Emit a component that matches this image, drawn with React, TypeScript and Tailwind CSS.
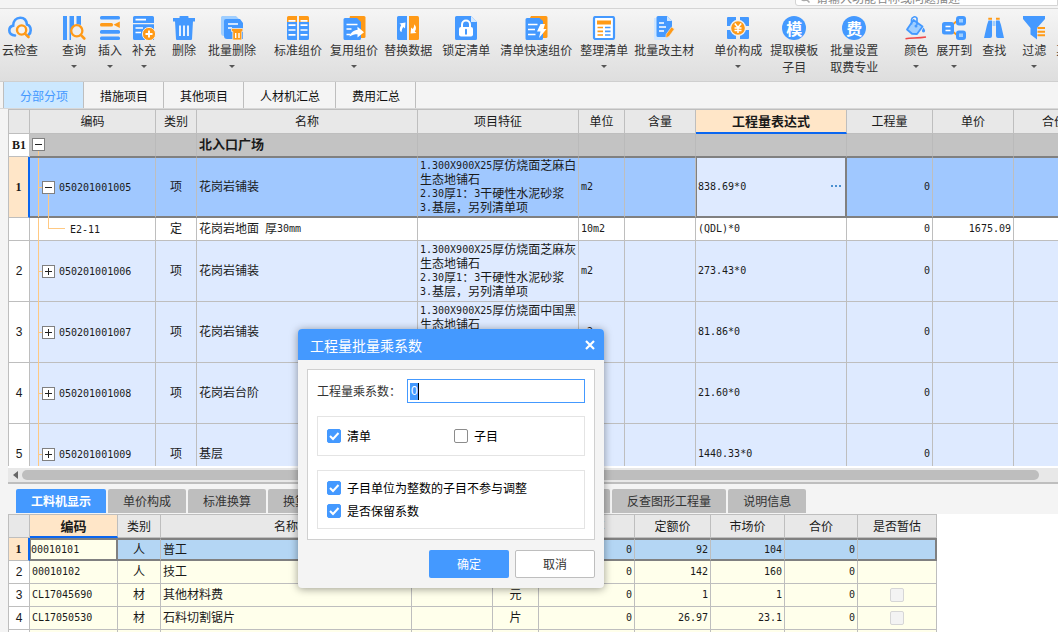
import React from "react";

const BLUE = "#4499ff";
const ORANGE = "#ff9a17";
const PALE = "#9fceff";

type IconName =
  | "cloud" | "query" | "insert" | "supplement" | "trash" | "batchTrash" | "standard" | "reuse" | "swap" | "lock"
  | "fast" | "arrange" | "material" | "price" | "template" | "fee" | "color" | "expand" | "find" | "filter" | "none";

const icons: Record<IconName, React.ReactNode> = {
  none: null,
  cloud: (
    <g fill="none" strokeLinecap="round">
      <path d="M7 19.5C3.500 19.500 1.300 17.400 1.300 14.500C1.300 11.800 3 10 5.200 9.600C5.300 5 8.200 1.700 12.200 1.700C16 1.700 18.600 4.300 19 8.600C21.400 9.400 22.700 11.600 22.700 14.200C22.700 16.500 21.800 18 20.500 18.900" stroke={BLUE} strokeWidth="2.6" />
      <circle cx="13.600" cy="14" r="4.600" stroke={ORANGE} strokeWidth="2.400" fill="#f4f4f4" />
      <path d="M17 17.600L20.500 21" stroke={ORANGE} strokeWidth="2.600" />
    </g>
  ),
  query: (
    <g>
      <path d="M1 0h4v24H1zM7.500 0H12v10L9 14v10H7.500zM14.500 0H19v9l-4.500-1z" fill={BLUE} />
      <circle cx="14.800" cy="14.800" r="5.600" stroke={ORANGE} strokeWidth="2.300" fill="#eeeeee" />
      <path d="M19 19.200L22.300 22.500" stroke={ORANGE} strokeWidth="2.600" strokeLinecap="round" />
    </g>
  ),
  insert: (
    <g>
      <rect x="2" y="0" width="20" height="3.600" rx="1.500" fill={BLUE} />
      <rect x="2" y="7" width="13" height="3.400" rx="1.500" fill={ORANGE} />
      <path d="M15.500 8.700L21.800 5.500V12z" fill={ORANGE} />
      <rect x="2" y="14" width="20" height="3.800" rx="1.500" fill={BLUE} />
      <rect x="2" y="20.400" width="20" height="3.600" rx="1.500" fill={BLUE} />
    </g>
  ),
  supplement: (
    <g>
      <path d="M2.500 0h18a1.500 1.500 0 0 1 1.500 1.500V7H1V1.500A1.500 1.500 0 0 1 2.500 0zM1 8.300h21V24H2.500A1.500 1.500 0 0 1 1 22.500z" fill={BLUE} />
      <path d="M3.500 3.700H14M3.500 12H11M3.500 16.500H9" stroke="#fff" strokeWidth="1.700" />
      <circle cx="17" cy="18" r="6.600" fill={ORANGE} stroke="#eeeeee" strokeWidth="1" />
      <path d="M13.500 18h7M17 14.500v7" stroke="#fff" strokeWidth="1.900" />
    </g>
  ),
  trash: (
    <g fill={BLUE}>
      <path d="M7.500 2V.8A.8.800 0 0 1 8.300 0h7.400a.8.800 0 0 1 .8.800V2H23v3.600H1V2z" />
      <path d="M3 5h18l-1 18a1 1 0 0 1-1 1H5a1 1 0 0 1-1-1z" />
      <path d="M8 9.500V20M12 9.500V20M16 9.500V20" stroke="#fff" strokeWidth="1.700" />
    </g>
  ),
  batchTrash: (
    <g>
      <path d="M2 0h14l3 3v17H4a3 3 0 0 1-3-3V1z" fill={PALE} />
      <path d="M6 3h14l3 4v16H7a3 3 0 0 1-3-3V5a2 2 0 0 1 2-2z" fill={BLUE} />
      <path d="M8 8h10M8 12h4" stroke="#fff" strokeWidth="1.600" />
      <path d="M11.500 12.500h11.300v3h-1V24h-9v-8.500h-1.300z" fill={ORANGE} stroke="#eeeeee" strokeWidth=".8" />
      <path d="M15.700 17v5M19 17v5" stroke="#fff" strokeWidth="1.400" />
    </g>
  ),
  standard: (
    <g>
      <path d="M1 1.500A1.500 1.500 0 0 1 2.500 0H11v6H1zM13 0h8.500A1.500 1.500 0 0 1 23 1.500V6H13z" fill={ORANGE} />
      <path d="M1 6h10v18H2.500A1.500 1.500 0 0 1 1 22.500zM13 6h10v16.500a1.500 1.500 0 0 1-1.500 1.500H13z" fill={BLUE} />
      <path d="M2.500 4.800h7M14.500 4.800h7M2.500 9.200h7M14.500 9.200h7M2.500 14h7M14.500 14h7M2.500 18.800h7M14.500 18.800h7" stroke="#fff" strokeWidth="1.700" />
    </g>
  ),
  reuse: (
    <g>
      <path d="M8 0h14a1.500 1.500 0 0 1 1.500 1.500v19A1.500 1.500 0 0 1 22 22h-5L7 4z" fill={ORANGE} />
      <path d="M3 2h12l4 4v16.500a1.500 1.500 0 0 1-1.500 1.500H3a1.500 1.500 0 0 1-1.500-1.500v-19A1.500 1.500 0 0 1 3 2z" fill={BLUE} />
      <path d="M4.500 8.500h11M4.500 13h5M4.500 18.500h4" stroke="#fff" strokeWidth="1.700" />
      <path d="M7.500 20.500c1-4 4.500-6.500 8-6.500v-3.200l6.500 5.400-6.500 5.300v-3.200c-3 0-5 .500-8 2.200z" fill="#fff" />
    </g>
  ),
  swap: (
    <g>
      <path d="M2.500 0H11v24H2.500A1.500 1.500 0 0 1 1 22.500v-21A1.500 1.500 0 0 1 2.500 0z" fill={BLUE} />
      <path d="M13 0h8.500A1.500 1.500 0 0 1 23 1.500v21a1.500 1.500 0 0 1-1.500 1.500H13z" fill={ORANGE} />
      <path d="M3.500 7.500l6-1-.5 6-1.700-1.500c-1 1.300-1.500 3-1.700 5C4 16 2.800 13 5.200 9zM20.500 17l-6 .5.700-6 1.600 1.500c1-1.300 1.500-2.800 1.400-4.700 2.300 2.200 2.300 5 .6 7.200z" fill="#fff" />
    </g>
  ),
  lock: (
    <g>
      <path d="M2.500 0H17l6 6v16.500a1.500 1.500 0 0 1-1.500 1.500h-19A1.500 1.500 0 0 1 1 22.500v-21A1.500 1.500 0 0 1 2.500 0z" fill={BLUE} />
      <path d="M17 0l6 6h-6z" fill="#d6eaff" />
      <rect x="5" y="11" width="14" height="9.500" rx="2" fill="#fff" />
      <path d="M8 11.500V8.500a4 4 0 0 1 8 0v3" fill="none" stroke="#fff" strokeWidth="2" />
      <path d="M12 13.800v4" stroke={BLUE} strokeWidth="2" strokeLinecap="round" />
    </g>
  ),
  fast: (
    <g>
      <path d="M7 0h15a1.500 1.500 0 0 1 1.500 1.500v19A1.500 1.500 0 0 1 22 22h-4L6 2z" fill={ORANGE} />
      <path d="M3 2h12.500L19 5v17.500a1.500 1.500 0 0 1-1.500 1.500H3a1.500 1.500 0 0 1-1.500-1.500v-19A1.500 1.500 0 0 1 3 2z" fill={BLUE} />
      <path d="M4 8.500h9.500M4 13.500h7M4 18.500h7.500" stroke="#fff" strokeWidth="1.700" />
      <path d="M16.500 8h4.500l-1.500 5h3l-7.500 9 1.500-6.500h-3.500z" fill="#fff" />
    </g>
  ),
  arrange: (
    <g>
      <rect x="2" y="1" width="20" height="22" rx="1.500" fill="#fff" stroke={BLUE} strokeWidth="2.200" />
      <rect x="5" y="4.500" width="14" height="4" fill={ORANGE} />
      <path d="M5.500 11.500H11M5.500 15.300H11M5.500 19H11" stroke={ORANGE} strokeWidth="1.700" />
      <path d="M13 11.500h5.500M13 15.300h5.500M13 19h5.500" stroke={BLUE} strokeWidth="1.700" />
    </g>
  ),
  material: (
    <g>
      <path d="M2 2h4v18.500h11.500V24H3.500A1.500 1.500 0 0 1 2 22.500z" fill="#cfe6ff" />
      <path d="M6 0h9l5 5v11l-5 5H6a1.500 1.500 0 0 1-1.500-1.500v-18A1.500 1.500 0 0 1 6 0z" fill={BLUE} />
      <path d="M15 0l5 5h-5z" fill="#cfe6ff" />
      <path d="M7 7h5M7 11h7M7 15h5" stroke="#fff" strokeWidth="1.600" />
      <path d="M14.200 18.200l5.300-7.200 2.900 2-5.300 7.400-3.300 1.500z" fill={ORANGE} stroke="#eeeeee" strokeWidth=".6" />
    </g>
  ),
  price: (
    <g>
      <path d="M2 1h8v5l-4 4H1V2a1 1 0 0 1 1-1zM14 1h8a1 1 0 0 1 1 1v8h-5l-4-4zM1 14h5l4 4v5H2a1 1 0 0 1-1-1zM18 14h5v8a1 1 0 0 1-1 1h-8v-5z" fill={BLUE} />
      <circle cx="12" cy="12" r="7.500" fill={ORANGE} stroke="#f1f1f1" strokeWidth="1.300" />
      <path d="M8.800 7.500l3.200 4 3.200-4M8.500 12h7M8.500 14.500h7M12 11.500v5.500" fill="none" stroke="#fff" strokeWidth="1.500" />
    </g>
  ),
  template: null,
  fee: null,
  color: (
    <g>
      <path d="M9.500 4L18.500 10.500 13 18 8 17.800 3 13.500z" fill={PALE} stroke={BLUE} strokeWidth="1.800" strokeLinejoin="round" />
      <path d="M7.500 8.500V3.500a3 3 0 0 1 5.500-1.300V9" fill="none" stroke={BLUE} strokeWidth="1.600" />
      <circle cx="12" cy="10" r="1.500" fill={BLUE} />
      <path d="M19.500 11.500c1.300 2 1.600 2.600 1.600 3.300a1.600 1.600 0 0 1-3.200 0c0-.7.500-1.300 1.600-3.300z" fill={BLUE} />
      <path d="M1.500 22.700C8 21.800 14 22.300 22 21" fill="none" stroke="#f04848" strokeWidth="1.600" />
    </g>
  ),
  expand: (
    <g>
      <path d="M10 9l5-4M10 15l5 4" stroke={ORANGE} strokeWidth="2" />
      <rect x="0" y="6" width="12" height="12.500" rx="2.500" fill={BLUE} />
      <path d="M3.500 10.500h5M3.500 14.500h5" stroke="#fff" strokeWidth="1.600" />
      <rect x="15.500" y="1.500" width="7" height="6.500" rx="1.500" fill="#9fceff" stroke={BLUE} strokeWidth="3" />
      <rect x="15.500" y="16" width="7" height="6.500" rx="1.500" fill="#9fceff" stroke={BLUE} strokeWidth="3" />
    </g>
  ),
  find: (
    <g>
      <path d="M6.500 4.500H10V20a2 2 0 0 1-2 2H2L5 9zM14 4.500h3.500L19 9l3 13h-6a2 2 0 0 1-2-2z" fill={BLUE} />
      <path d="M10.500 5h3v5h-3z" fill={PALE} />
      <path d="M6.300 2.800H10M14 2.800h3.700" stroke={ORANGE} strokeWidth="2" />
    </g>
  ),
  filter: (
    <g>
      <path d="M1 0h22v3l-8 9v11.500L8.500 18.500V12L1 3z" fill={BLUE} />
      <path d="M15.500 12H23M15.500 15.700H23M15.500 19.300H23" stroke={ORANGE} strokeWidth="1.900" />
    </g>
  ),
};

type Tool = { icon: IconName; lines: string[]; menu?: boolean; gap: string };

const tools: Tool[] = [
  { icon: "cloud", lines: ["云检查"], gap: "ml-[2px]" },
  { icon: "query", lines: ["查询"], menu: true, gap: "ml-6" },
  { icon: "insert", lines: ["插入"], menu: true, gap: "ml-3" },
  { icon: "supplement", lines: ["补充"], menu: true, gap: "ml-[10px]" },
  { icon: "trash", lines: ["删除"], gap: "ml-4" },
  { icon: "batchTrash", lines: ["批量删除"], menu: true, gap: "ml-3" },
  { icon: "standard", lines: ["标准组价"], gap: "ml-[18px]" },
  { icon: "reuse", lines: ["复用组价"], menu: true, gap: "ml-2" },
  { icon: "swap", lines: ["替换数据"], gap: "ml-[6px]" },
  { icon: "lock", lines: ["锁定清单"], gap: "ml-[10px]" },
  { icon: "fast", lines: ["清单快速组价"], gap: "ml-[10px]" },
  { icon: "arrange", lines: ["整理清单"], menu: true, gap: "ml-2" },
  { icon: "material", lines: ["批量改主材"], gap: "ml-[6px]" },
  { icon: "price", lines: ["单价构成"], menu: true, gap: "ml-5" },
  { icon: "template", lines: ["提取模板", "子目"], gap: "ml-2" },
  { icon: "fee", lines: ["批量设置", "取费专业"], gap: "ml-3" },
  { icon: "color", lines: ["颜色"], menu: true, gap: "ml-[26px]" },
  { icon: "expand", lines: ["展开到"], menu: true, gap: "ml-2" },
  { icon: "find", lines: ["查找"], gap: "ml-[10px]" },
  { icon: "filter", lines: ["过滤"], menu: true, gap: "ml-4" },
  { icon: "none", lines: ["其他"], gap: "ml-[10px]" },
];

const badges: Partial<Record<IconName, string>> = { template: "模", fee: "费" };

function ToolButton({ tool }: { tool: Tool }) {
  const badge = badges[tool.icon];
  return (
    <button type="button" className={`flex shrink-0 flex-col items-center text-xs leading-[17px] whitespace-nowrap text-[#333] ${tool.gap}`}>
      {badge ? (
        <span className="flex size-6 items-center justify-center rounded-full bg-[#4499ff] text-base leading-6 font-bold text-white">{badge}</span>
      ) : (
        <svg viewBox="0 0 24 24" className="size-6">{icons[tool.icon]}</svg>
      )}
      <span className="mt-px">{tool.lines[0]}</span>
      {tool.lines[1] && <span>{tool.lines[1]}</span>}
      {tool.menu && (
        <svg viewBox="0 0 6 3" className="mt-[7px] h-[3px] w-[6px]"><path d="M0 0h6L3 3z" fill="#555" /></svg>
      )}
    </button>
  );
}

/* Half-width characters take half the advance of a full-width one. */
function Grid({ children }: { children: string }) {
  return (
    <>
      {children.split(/([\x20-\x7e]+)/).map((run, i) =>
        i % 2 ? (
          <span key={i} className="align-[1px] font-['DejaVu_Sans_Mono',monospace] text-[10px] leading-none">{run}</span>
        ) : (
          run
        ),
      )}
    </>
  );
}

function Toggle({ open, label }: { open: boolean; label: string }) {
  return (
    <button type="button" aria-label={label} aria-expanded={open} className="relative z-10 block size-[13px] shrink-0 border border-[#808080] bg-white">
      <svg viewBox="0 0 11 11" className="size-[11px]">
        <path d={open ? "M2 5.5h7" : "M2 5.5h7M5.5 2v7"} stroke="#222" strokeWidth="1" />
      </svg>
    </button>
  );
}

const line = "bg-[#ffc983]";

type Item = {
  no: string; code: string; kind: string; name: string; feature?: string[]; unit: string; expr: string; price?: string;
};

const items: Item[] = [
  { no: "1", code: "050201001005", kind: "项", name: "花岗岩铺装", feature: ["1.300X900X25厚仿烧面芝麻白", "生态地铺石", "2.30厚1：3干硬性水泥砂浆", "3.基层，另列清单项"], unit: "m2", expr: "838.69*0" },
  { no: "", code: "E2-11", kind: "定", name: "花岗岩地面 厚30mm", unit: "10m2", expr: "(QDL)*0", price: "1675.09" },
  { no: "2", code: "050201001006", kind: "项", name: "花岗岩铺装", feature: ["1.300X900X25厚仿烧面芝麻灰", "生态地铺石", "2.30厚1：3干硬性水泥砂浆", "3.基层，另列清单项"], unit: "m2", expr: "273.43*0" },
  { no: "3", code: "050201001007", kind: "项", name: "花岗岩铺装", feature: ["1.300X900X25厚仿烧面中国黑", "生态地铺石", "2.30厚1：3干硬性水泥砂浆", "3.基层，另列清单项"], unit: "m2", expr: "81.86*0" },
  { no: "4", code: "050201001008", kind: "项", name: "花岗岩台阶", unit: "m2", expr: "21.60*0" },
  { no: "5", code: "050201001009", kind: "项", name: "基层", unit: "m3", expr: "1440.33*0" },
];

const rowHead = "border-b border-b-[#bebebe] p-0 text-center leading-4";
const rowHeadActive = "border-r-2 border-r-[#0a66f0] bg-[#ffe6c8] font-['Liberation_Serif',serif] font-bold";
const rowHeadPlain = "border-r border-r-[#bebebe] bg-white font-['Liberation_Sans',sans-serif] font-normal";

function ItemRow({ item }: { item: Item }) {
  const selected = item.no === "1";
  const child = item.no === "";
  const height = child ? "h-[23px]" : "h-[61px]";
  const bg = selected ? "bg-[#a0c8ff]" : child ? "bg-white" : "bg-[#deeaff]";
  const edge = selected ? "border-t border-r border-b-2 border-t-[#808080] border-b-[#808080] border-r-[#bebebe]" : "border-r border-b border-[#bebebe]";
  const cell = `${height} ${bg} ${edge} p-0 px-[2px] pb-[2px] leading-[14px]`;
  return (
    <tr>
      <th scope="row" className={`${height} ${rowHead} ${selected ? rowHeadActive : rowHeadPlain}`}>{item.no}</th>
      <td className={`${height} ${bg} ${edge} relative p-0`}>
        <span className={`absolute top-0 -bottom-px left-2 w-px ${line}`} />
        {!child && <span className={`absolute top-1/2 left-2 h-px w-1 ${line}`} />}
        {selected && <span className={`absolute top-1/2 -bottom-[2px] left-[18px] w-px ${line}`} />}
        {child && <span className="absolute top-0 left-[18px] h-[11px] w-[17px] border-b border-l border-[#ffc983]" />}
        <div className={`flex items-center leading-[14px] ${child ? "pl-10" : "gap-1 pl-3"}`}>
          {!child && <Toggle open={selected} label={item.code} />}
          <span><Grid>{item.code}</Grid></span>
        </div>
      </td>
      <td className={`${cell} text-center`}>{item.kind}</td>
      <td className={cell}><Grid>{item.name}</Grid></td>
      <td className={cell}>
        {item.feature?.map((text) => <div key={text} className="h-[14px] whitespace-nowrap"><Grid>{text}</Grid></div>)}
      </td>
      <td className={cell}><Grid>{item.unit}</Grid></td>
      <td className={`${cell} ${selected ? "border-r-[#808080]" : ""}`} />
      {selected ? (
        <td className={`${height} border-t border-r-2 border-b-2 border-l border-[#808080] bg-[#deeaff] p-0 pr-1 pb-[2px] pl-px`}>
          <div className="flex items-center justify-between leading-[14px]">
            <span><Grid>{item.expr}</Grid></span>
            <button type="button" aria-label="编辑表达式" className="flex gap-[2px]">
              <span className="size-[2px] bg-[#4a90d0]" />
              <span className="size-[2px] bg-[#4a90d0]" />
              <span className="size-[2px] bg-[#4a90d0]" />
            </button>
          </div>
        </td>
      ) : (
        <td className={cell}><Grid>{item.expr}</Grid></td>
      )}
      <td className={`${cell} text-right`}><Grid>0</Grid></td>
      <td className={`${cell} text-right`}>{item.price && <Grid>{item.price}</Grid>}</td>
      <td className={cell} />
    </tr>
  );
}

const itemHeads = ["", "编码", "类别", "名称", "项目特征", "单位", "含量", "工程量表达式", "工程量", "单价", "合价"];
const itemCols = ["w-[21px]", "w-[126px]", "w-[41px]", "w-[221px]", "w-[161px]", "w-[46px]", "w-[71px]", "w-[151px]", "w-[86px]", "w-[81px]", "w-[81px]"];

function ItemTable() {
  const group = "h-[23px] border-r border-b border-r-[#bababa] border-b-[#808080] bg-[#c3c3c3] p-0";
  return (
    <table className="w-[1087px] table-fixed border-separate border-spacing-0 border-t border-l border-[#bebebe] text-xs text-[#1a1a1a]">
      <colgroup>{itemCols.map((w, i) => <col key={i} className={w} />)}</colgroup>
      <thead>
        <tr>
          {itemHeads.map((head, i) => (
            <th key={i} scope="col" className={head === "工程量表达式" ? "h-6 border-r border-b-2 border-r-[#bebebe] border-b-[#0a66f0] bg-[#ffe6c8] p-0 pb-px text-[13px] leading-4 font-bold" : "h-6 border-r border-b border-[#bebebe] bg-[#e8e8e8] p-0 pb-[2px] leading-4 font-normal"}>
              {head}
            </th>
          ))}
        </tr>
      </thead>
      <tbody>
        <tr>
          <th scope="row" className="h-[23px] border-r border-b border-[#bebebe] bg-white p-0 text-center font-['Liberation_Serif',serif] leading-4 font-bold">B1</th>
          <td className={`${group} relative pb-px pl-[2px]`}>
            <span className={`absolute top-[17px] bottom-0 left-2 w-px ${line}`} />
            <Toggle open label="北入口广场" />
          </td>
          <td className={group} />
          <td className={`${group} px-[2px] pb-[2px] text-[13px] leading-4 font-bold`}>北入口广场</td>
          {itemHeads.slice(4).map((head) => <td key={head} className={group} />)}
        </tr>
        {items.map((item) => <ItemRow key={item.code} item={item} />)}
      </tbody>
    </table>
  );
}

const partHeads = ["", "编码", "类别", "名称", "规格及型号", "单位", "损耗率", "定额价", "市场价", "合价", "是否暂估"];
const partCols = ["w-[21px]", "w-[88px]", "w-[43px]", "w-[251px]", "w-[81px]", "w-[46px]", "w-[96px]", "w-[76px]", "w-[74px]", "w-[73px]", "w-[79px]"];
const parts = [
  { code: "00010101", kind: "人", name: "普工", unit: "工日", base: "92", market: "104", box: false },
  { code: "00010102", kind: "人", name: "技工", unit: "工日", base: "142", market: "160", box: false },
  { code: "CL17045690", kind: "材", name: "其他材料费", unit: "元", base: "1", market: "1", box: true },
  { code: "CL17050530", kind: "材", name: "石料切割锯片", unit: "片", base: "26.97", market: "23.1", box: true },
];

function PartTable() {
  return (
    <table className="w-[929px] table-fixed border-separate border-spacing-0 border-t border-l border-[#bebebe] text-xs text-[#1a1a1a]">
      <colgroup>{partCols.map((w, i) => <col key={i} className={w} />)}</colgroup>
      <thead>
        <tr>
          {partHeads.map((head, i) => (
            <th key={i} scope="col" className={i === 1 ? "h-[23px] border-r border-b-2 border-r-[#bebebe] border-b-[#0a66f0] bg-[#ffe6c8] p-0 text-[13px] leading-4 font-bold" : "h-[23px] border-r border-b border-[#bebebe] bg-[#e8e8e8] p-0 leading-4 font-normal"}>
              {head}
            </th>
          ))}
        </tr>
      </thead>
      <tbody>
        {parts.map((part, i) => {
          const selected = i === 0;
          const edge = selected ? "border-y-2 border-r border-y-[#808080] border-r-[#bebebe] bg-[#b4d6f4]" : "border-r border-b border-[#bebebe] bg-[#ffffeb]";
          const cell = `h-[23px] p-0 px-[2px] pb-[2px] leading-4 ${edge}`;
          return (
            <tr key={part.code}>
              <th scope="row" className={`h-[23px] ${rowHead} ${selected ? rowHeadActive : rowHeadPlain}`}>{i + 1}</th>
              <td className={selected ? "h-[23px] border-y-2 border-r-2 border-l border-[#808080] bg-[#ffffeb] p-0 pb-[2px] leading-4" : cell}>
                <Grid>{part.code}</Grid>
              </td>
              <td className={`${cell} text-center`}>{part.kind}</td>
              <td className={cell}>{part.name}</td>
              <td className={cell} />
              <td className={`${cell} text-center`}>{part.unit}</td>
              <td className={`${cell} text-right`}><Grid>0</Grid></td>
              <td className={`${cell} text-right`}><Grid>{part.base}</Grid></td>
              <td className={`${cell} text-right`}><Grid>{part.market}</Grid></td>
              <td className={`${cell} text-right`}><Grid>0</Grid></td>
              <td className={selected ? "h-[23px] border-y-2 border-r-2 border-[#808080] bg-[#b4d6f4] p-0" : `h-[23px] p-0 ${edge}`}>
                {part.box && (
                  <input type="checkbox" disabled aria-label={`${part.name}是否暂估`} className="mx-auto block size-[14px] appearance-none rounded-[2px] border border-[#d6d6d6] bg-[#f3f3f3]" />
                )}
              </td>
            </tr>
          );
        })}
        <tr>
          {partHeads.map((_, i) => (
            <td key={i} className={`h-[23px] border-r border-b border-[#bebebe] p-0 ${i ? "bg-[#ffffeb]" : "bg-white"}`} />
          ))}
        </tr>
      </tbody>
    </table>
  );
}

function Check({ label, checked = false }: { label: string; checked?: boolean }) {
  return (
    <label className="flex items-center gap-[6px] text-xs leading-4 text-black">
      <span className="grid size-[14px]">
        <input type="checkbox" defaultChecked={checked} className="peer col-start-1 row-start-1 size-[14px] appearance-none rounded-[2px] border border-[#8c8c8c] bg-white checked:border-[#4499ff] checked:bg-[#4499ff]" />
        <svg viewBox="0 0 14 14" className="pointer-events-none invisible col-start-1 row-start-1 size-[14px] peer-checked:visible">
          <path d="M3 7l3 3 5.500-6" fill="none" stroke="#fff" strokeWidth="2" />
        </svg>
      </span>
      {label}
    </label>
  );
}

function FactorDialog() {
  return (
    <div role="dialog" aria-labelledby="dialog-title" className="absolute top-[329px] left-[298px] z-20 w-[306px] overflow-hidden rounded bg-[#f4f4f4] shadow-[0_1px_8px_rgba(0,0,0,0.4)]">
      <header className="flex h-[31px] items-center justify-between bg-[#4499ff] pr-[9px] pl-3 text-white">
        <h2 id="dialog-title" className="text-sm leading-5">工程量批量乘系数</h2>
        <button type="button" aria-label="关闭">
          <svg viewBox="0 0 10 10" className="size-[10px]"><path d="M1 1l8 8M9 1L1 9" stroke="#fff" strokeWidth="2.200" /></svg>
        </button>
      </header>
      <div className="px-[9px] pt-[9px] pb-[10px]">
        <div className="border border-[#d0d0d0] bg-white p-[9px] pb-[10px]">
          <div className="flex items-center justify-between">
            <label htmlFor="factor" className="text-xs leading-4 text-[#333]">工程量乘系数：</label>
            <div className="flex h-6 w-[178px] items-center border border-[#4499ff] bg-white px-[2px]">
              <input id="factor" defaultValue="0" className="h-[17px] w-[9px] border-r border-black bg-[#4499ff] pl-px font-['Liberation_Sans'] text-xs text-white outline-none" />
            </div>
          </div>
          <div className="mt-[13px] grid h-10 grid-cols-[127px_1fr] items-center border border-[#e4e4e4] px-[9px]">
            <Check label="清单" checked />
            <Check label="子目" />
          </div>
          <div className="mt-[14px] flex h-[59px] flex-col justify-center gap-[7px] border border-[#e4e4e4] px-[9px]">
            <Check label="子目单位为整数的子目不参与调整" checked />
            <Check label="是否保留系数" checked />
          </div>
        </div>
        <div className="mt-[10px] flex justify-end gap-[6px] text-xs">
          <button type="button" className="h-7 w-20 rounded-[2px] bg-[#4499ff] text-white">确定</button>
          <button type="button" className="h-7 w-20 rounded-[2px] border border-[#bebebe] bg-white text-[#333]">取消</button>
        </div>
      </div>
    </div>
  );
}

const topTabs = ["分部分项", "措施项目", "其他项目", "人材机汇总", "费用汇总"];
const bottomTabs = ["工料机显示", "单价构成", "标准换算", "换算信息", "安装费用", "特征及内容", "工程量明细", "反查图形工程量", "说明信息"];

export default function App() {
  return (
    <div className="relative flex h-screen flex-col overflow-hidden bg-[#f4f4f4] font-['Noto_Sans_CJK_SC',sans-serif]">
      <div className="flex h-[9px] shrink-0 items-end justify-end overflow-hidden border-b border-[#d4d4d4]">
        <label className="mb-[2px] flex h-5 w-[263px] shrink-0 items-center gap-[6px] rounded-l-[3px] border border-[#d4d4d4] bg-white pt-[3px] pl-[4px]">
          <svg viewBox="0 0 10 10" className="size-[10px]"><path d="M6.500 6.500L9.500 9.500M7.500 4a3.500 3.500 0 1 1-7 0 3.500 3.500 0 0 1 7 0z" fill="none" stroke="#aaa" strokeWidth="1.500" /></svg>
          <input aria-label="搜索" placeholder="请输入功能名称或问题描述" className="h-4 min-w-0 flex-1 bg-transparent text-xs leading-4 outline-none placeholder:text-[#888]" />
        </label>
      </div>
      <div className="flex h-[73px] shrink-0 items-start overflow-hidden border-b border-[#cfcfcf] bg-linear-to-b from-[#f5f5f5] to-[#dedede] pt-[7px]">
        {tools.map((tool) => <ToolButton key={tool.lines[0]} tool={tool} />)}
      </div>
      <nav className="flex h-[27px] shrink-0 border-b border-[#d8d8d8] pl-[3px] text-xs">
        {topTabs.map((tab, i) => (
          <button key={tab} type="button" className={`border-r border-[#bebebe] pt-[2px] pr-[15px] pl-4 ${i === 0 ? "border-l bg-[#cce8ff] text-[#4499ff]" : "text-[#111]"}`}>
            {tab}
          </button>
        ))}
      </nav>
      <main className="flex min-h-0 flex-1 flex-col pl-2">
        <div className="min-h-0 flex-1 overflow-hidden bg-white">
          <ItemTable />
        </div>
        <div className="flex h-[18px] shrink-0 items-center border-t-2 border-b-2 border-t-white border-b-[#bebebe] bg-[#e8e8e8] pr-[19px] pl-[5px]">
          <svg viewBox="0 0 5 8" className="h-2 w-[5px]"><path d="M5 0v8L0 4z" fill="#666" /></svg>
          <div className="ml-1 h-[10px] flex-1 rounded-full bg-[#bebebe]" />
        </div>
        <section className="flex h-[148px] shrink-0 flex-col overflow-hidden">
          <div className="flex h-[30px] shrink-0 items-stretch gap-[2px] pt-[5px] pb-px pl-2 text-xs">
            {bottomTabs.map((tab, i) => (
              <button key={tab} type="button" className={`shrink-0 rounded-t-[2px] px-[15px] whitespace-nowrap ${i === 0 ? "bg-[#4499ff] font-bold text-white" : "bg-[#bebebe] text-[#333]"}`}>
                {tab}
              </button>
            ))}
          </div>
          <div className="min-h-0 flex-1 overflow-hidden bg-white">
            <PartTable />
          </div>
        </section>
      </main>
      <FactorDialog />
    </div>
  );
}
